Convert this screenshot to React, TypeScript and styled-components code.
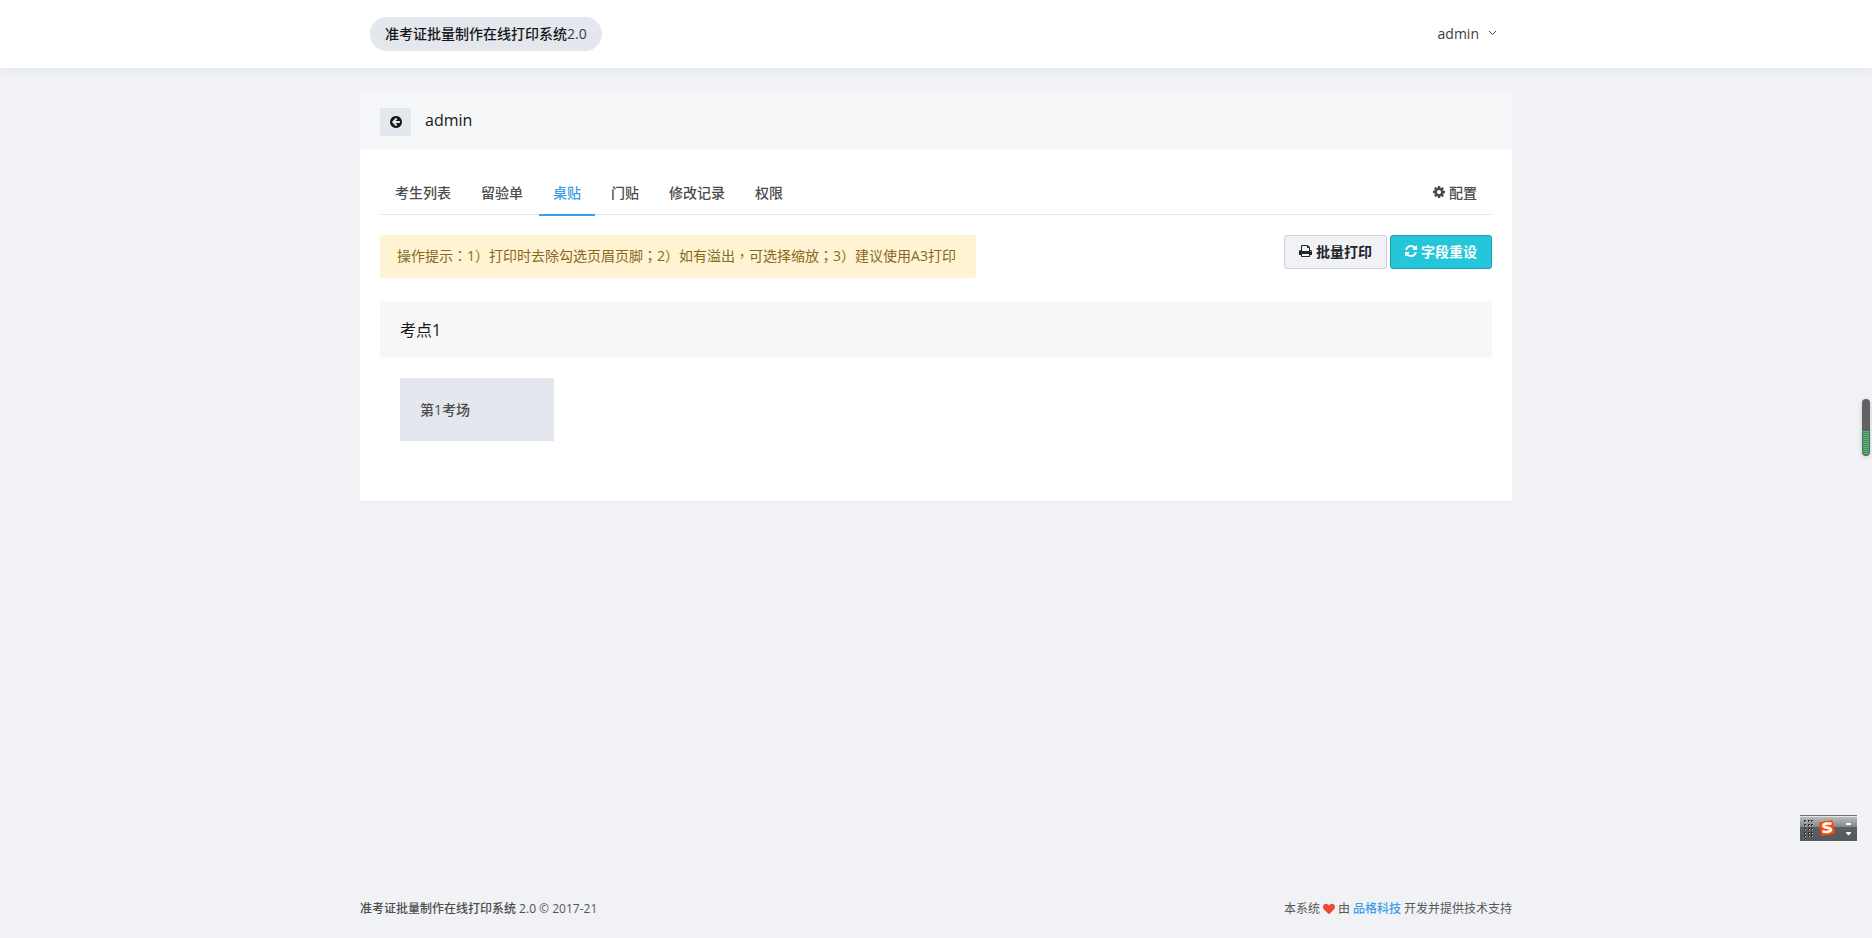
import React from "react";
import styled, { createGlobalStyle } from "styled-components";

const color = {
  body: "#f0f2f5",
  panel: "#f6f7f9",
  tint: "#e4e7ed",
  text: "#575757",
  dark: "#171717",
  primary: "#3f9ce8",
};

const GlobalStyle = createGlobalStyle`
  *, *::before, *::after { box-sizing: border-box; }
  body {
    margin: 0;
    background: ${color.body};
    color: ${color.text};
    font-family: "Open Sans", "Noto Sans CJK SC", sans-serif;
    font-size: 14px;
    line-height: 21px;
  }
  a { color: inherit; text-decoration: none; }
  button { font: inherit; cursor: pointer; }
  h1, h2, p, ul { margin: 0; padding: 0; }
`;

const Page = styled.div`
  display: flex;
  flex-direction: column;
  min-height: 100vh;
`;

const Container = styled.div`
  width: 100%;
  max-width: 1200px;
  margin: 0 auto;
  padding: 0 24px;
`;

const Header = styled.header`
  background: #fff;
  box-shadow: 0 2px 10px #e4e7ed;
`;

const HeaderRow = styled(Container)`
  display: flex;
  align-items: center;
  justify-content: space-between;
  height: 68px;
  padding: 0 34px;
`;

const Brand = styled.a`
  padding: 6px 15px 7px;
  border-radius: 17px;
  background: ${color.tint};
  color: ${color.dark};
  font-weight: 500;
  white-space: nowrap;
`;

const Version = styled.span`
  color: #3c3c3c;
  font-weight: 400;
`;

const UserButton = styled.button`
  display: flex;
  align-items: center;
  gap: 9px;
  padding: 5px 5px 7px;
  border: 0;
  background: none;
  color: #3c3c3c;
`;

const Main = styled.main`
  flex: 1;
  padding: 24px 0;
`;

const Card = styled.section`
  background: #fff;
  box-shadow: 0 1px 1px #e4e7ed;
`;

const CardHead = styled.div`
  display: flex;
  align-items: flex-start;
  gap: 14px;
  padding: 16px 20px 14px;
  background: ${color.panel};
`;

const BackButton = styled.button`
  display: flex;
  align-items: center;
  justify-content: center;
  width: 31px;
  height: 28px;
  padding: 0;
  border: 0;
  border-radius: 2px;
  background: ${color.tint};
  color: ${color.dark};
`;

const CardTitle = styled.h1`
  color: ${color.dark};
  font-size: 16px;
  font-weight: 400;
  line-height: 24px;
`;

const CardBody = styled.div`
  padding: 20px 20px 40px;
`;

const Tabs = styled.ul`
  display: flex;
  list-style: none;
  border-bottom: 1px solid ${color.tint};
`;

const Tab = styled.li<{ $end?: boolean }>`
  margin: 0 1px;
  ${(p) => (p.$end ? "margin-left: auto;" : "")}
`;

const TabLink = styled.a<{ $active?: boolean }>`
  display: flex;
  align-items: center;
  gap: 4px;
  height: 44px;
  padding: 0 14px;
  font-weight: 500;
  color: ${(p) => (p.$active ? color.primary : "#4c4c4c")};
  box-shadow: ${(p) => (p.$active ? `0 2px ${color.primary}` : "none")};
`;

const Tools = styled.div`
  display: flex;
  align-items: flex-start;
  justify-content: space-between;
  margin: 20px 0 24px;
`;

const Notice = styled.p`
  padding: 10px 20px 12px 17px;
  border-radius: 3px;
  background: #fff3d4;
  color: #866a1c;
`;

/* Traditional-style punctuation sits in the middle of its em box. */
const Centered = styled.span`
  font-family: "Noto Sans CJK TC", sans-serif;
`;

const Buttons = styled.div`
  display: flex;
  gap: 3px;
`;

const Button = styled.button<{ $info?: boolean }>`
  display: flex;
  align-items: center;
  gap: 4px;
  height: 34px;
  padding: 0 14px 2px;
  border: 1px solid ${(p) => (p.$info ? "#1e9cac" : "#cbcfe0")};
  border-radius: 3px;
  background: ${(p) => (p.$info ? "#26c6da" : color.body)};
  color: ${(p) => (p.$info ? "#fff" : "#212529")};
  font-weight: 600;
`;

const SiteTitle = styled.h2`
  padding: 16px 20px;
  background: ${color.panel};
  color: ${color.dark};
  font-size: 16px;
  font-weight: 400;
  line-height: 24px;
`;

const Rooms = styled.div`
  display: grid;
  grid-template-columns: repeat(auto-fill, 154px);
  gap: 20px;
  padding: 20px;
`;

const Room = styled.a`
  padding: 21px 20px;
  background: ${color.tint};
  color: #4c4c4c;
  font-weight: 500;
`;

const FooterRow = styled(Container)`
  display: flex;
  justify-content: space-between;
  padding: 20px 24px;
  font-size: 12px;
  line-height: 18px;
`;

const Product = styled.a`
  font-weight: 500;
  color: #4c4c4c;
`;

const Credit = styled.span`
  display: flex;
  align-items: center;
  gap: 3px;
`;

const Vendor = styled.a`
  color: ${color.primary};
  font-weight: 500;
`;

const Heart = styled.span`
  display: flex;
  color: #ea4b35;
`;

const Meter = styled.div`
  position: fixed;
  right: 2px;
  top: 399px;
  display: flex;
  flex-direction: column;
  justify-content: flex-end;
  width: 8px;
  height: 57px;
  padding: 1px;
  border-radius: 4px;
  background: #606163;
  box-shadow: 0 1px 4px #c8c9cc;
`;

const MeterFill = styled.div`
  height: 24px;
  border-radius: 0 0 3px 3px;
  background: repeating-linear-gradient(#3fc868 0 1px, #55806a 1px 2px);
`;

const InputBar = styled.div`
  position: fixed;
  right: 15px;
  bottom: 97px;
  width: 57px;
  height: 26px;

  svg { display: block; }
`;

const glyphs = {
  back: "M1408 960v-128q0-26-19-45t-45-19h-502l189-189q19-19 19-45t-19-45l-91-91q-18-18-45-18t-45 18l-362 362-91 91q-18 18-18 45t18 45l91 91 362 362q18 18 45 18t45-18l91-91q18-18 18-45t-18-45l-189-189h502q26 0 45-19t19-45zm256-64q0 209-103 385.5t-279.5 279.5-385.5 103-385.5-103-279.5-279.5-103-385.5 103-385.5 279.5-279.5 385.5-103 385.5 103 279.5 279.5 103 385.5z",
  cog: "M1152 896q0-106-75-181t-181-75-181 75-75 181 75 181 181 75 181-75 75-181zm512-109v222q0 12-8 23t-20 13l-185 28q-19 54-39 91 35 50 107 138 10 12 10 25t-9 23q-27 37-99 108t-94 71q-12 0-26-9l-138-108q-44 23-91 38-16 136-29 186-7 28-36 28h-222q-14 0-24.5-8.5t-11.5-21.5l-28-184q-49-16-90-37l-141 107q-10 9-25 9-14 0-25-11-126-114-165-168-7-10-7-23 0-12 8-23 15-21 51-66.5t54-70.5q-27-50-41-99l-183-27q-13-2-21-12.5t-8-23.5v-222q0-12 8-23t19-13l186-28q14-46 39-92-40-57-107-138-10-12-10-24 0-10 9-23 26-36 98.5-107.5t94.5-71.5q13 0 26 10l138 107q44-23 91-38 16-136 29-186 7-28 36-28h222q14 0 24.5 8.5t11.5 21.5l28 184q49 16 90 37l142-107q9-9 24-9 13 0 25 10 129 119 165 170 7 8 7 22 0 12-8 23-15 21-51 66.5t-54 70.5q26 50 41 98l183 28q13 2 21 12.5t8 23.5z",
  print:
    "M448 1536h896v-256h-896v256zm0-640h896v-384h-160q-40 0-68-28t-28-68v-160h-640v640zm1152 64q0-26-19-45t-45-19-45 19-19 45 19 45 45 19 45-19 19-45zm128 0v416q0 13-9.5 22.5t-22.5 9.5h-224v160q0 40-28 68t-68 28h-960q-40 0-68-28t-28-68v-160h-224q-13 0-22.5-9.5t-9.5-22.5v-416q0-79 56.5-135.5t135.5-56.5h64v-544q0-40 28-68t68-28h672q40 0 88 20t76 48l152 152q28 28 48 76t20 88v256h64q79 0 135.5 56.5t56.5 135.5z",
  refresh:
    "M1639 1056q0 5-1 7-64 268-268 434.5t-478 166.5q-146 0-282.5-55t-243.5-157l-129 129q-19 19-45 19t-45-19-19-45v-448q0-26 19-45t45-19h448q26 0 45 19t19 45-19 45l-137 137q71 66 161 102t187 36q134 0 250-65t186-179q11-17 53-117 8-23 30-23h192q13 0 22.5 9.5t9.5 22.5zm25-800v448q0 26-19 45t-45 19h-448q-26 0-45-19t-19-45 19-45l138-138q-148-137-349-137-134 0-250 65t-186 179q-11 17-53 117-8 23-30 23h-199q-13 0-22.5-9.5t-9.5-22.5v-7q65-268 270-434.5t480-166.5q146 0 284 55.5t245 156.5l130-129q19-19 45-19t45 19 19 45z",
  heart:
    "M896 1664q-26 0-44-18l-624-602q-10-8-27.5-26t-55.5-65.5-68-97.5-53.5-121-23.5-138q0-220 127-344t351-124q62 0 126.5 21.5t120 58 95.5 68.5 76 68q36-36 76-68t95.5-68.5 120-58 126.5-21.5q224 0 351 124t127 344q0 221-229 450l-623 600q-18 18-44 18z",
};

function Icon({ name, width = 12, height = 14 }: { name: keyof typeof glyphs; width?: number; height?: number }) {
  const span = Math.round((width / height) * 1792);
  return (
    <svg
      width={width}
      height={height}
      viewBox={`${(1792 - span) / 2} 0 ${span} 1792`}
      fill="currentColor"
      aria-hidden="true"
    >
      <path d={glyphs[name]} />
    </svg>
  );
}

const tabs = ["考生列表", "留验单", "桌贴", "门贴", "修改记录", "权限"];

const tip = "操作提示：1）打印时去除勾选页眉页脚；2）如有溢出，可选择缩放；3）建议使用A3打印";

const grip = [6, 10, 14, 18, 21].flatMap((y) => [4, 8, 11].map((x) => ({ x, y: y - 1 })));

export default function App() {
  return (
    <Page>
      <GlobalStyle />
      <Header>
        <HeaderRow>
          <Brand href="#">
            准考证批量制作在线打印系统<Version>2.0</Version>
          </Brand>
          <UserButton type="button">
            admin
            <svg width="9" height="6" viewBox="0 0 9 6" fill="none" stroke="currentColor" aria-hidden="true">
              <path d="M1 1l3.500 3.500L8 1" />
            </svg>
          </UserButton>
        </HeaderRow>
      </Header>

      <Main>
        <Container>
          <Card>
            <CardHead>
              <BackButton type="button" aria-label="返回">
                <Icon name="back" />
              </BackButton>
              <CardTitle>admin</CardTitle>
            </CardHead>
            <CardBody>
              <Tabs>
                {tabs.map((label) => (
                  <Tab key={label}>
                    <TabLink href="#" $active={label === "桌贴"}>
                      {label}
                    </TabLink>
                  </Tab>
                ))}
                <Tab $end>
                  <TabLink href="#">
                    <Icon name="cog" />
                    配置
                  </TabLink>
                </Tab>
              </Tabs>
              <Tools>
                <Notice>
                  {tip.split(/([：；，])/).map((part, i) => (i % 2 ? <Centered key={i}>{part}</Centered> : part))}
                </Notice>
                <Buttons>
                  <Button type="button">
                    <Icon name="print" width={13} />
                    批量打印
                  </Button>
                  <Button type="button" $info>
                    <Icon name="refresh" />
                    字段重设
                  </Button>
                </Buttons>
              </Tools>
              <SiteTitle>考点1</SiteTitle>
              <Rooms>
                <Room href="#">第1考场</Room>
              </Rooms>
            </CardBody>
          </Card>
        </Container>
      </Main>

      <footer>
        <FooterRow>
          <span>
            <Product href="#">准考证批量制作在线打印系统 2.0</Product> © 2017-21
          </span>
          <Credit>
            本系统
            <Heart>
              <Icon name="heart" width={12} height={12} />
            </Heart>
            由 <Vendor href="#">品格科技</Vendor> 开发并提供技术支持
          </Credit>
        </FooterRow>
      </footer>

      <Meter>
        <MeterFill />
      </Meter>
      <InputBar>
        <svg width="57" height="26" viewBox="0 0 57 26" aria-hidden="true">
          <defs>
            <linearGradient id="metal" x1="0" y1="0" x2="0" y2="1">
              <stop offset="0" stopColor="#c4c6c6" />
              <stop offset="0.450" stopColor="#858889" />
              <stop offset="0.460" stopColor="#5b5f61" />
              <stop offset="1" stopColor="#55595b" />
            </linearGradient>
          </defs>
          <rect width="57" height="26" fill="url(#metal)" />
          <rect width="57" height="1" fill="#6c7072" />
          <rect y="1" width="57" height="1" fill="#e4e6e6" />
          {grip.map((d) => (
            <g key={`${d.x}-${d.y}`}>
              <rect x={d.x} y={d.y} width="2" height="2" fill="#2b2d2e" />
              <rect x={d.x + 1} y={d.y + 1} width="1" height="1" fill="#c6c8c8" />
            </g>
          ))}
          <rect x="20" y="6" width="14" height="14" rx="2" fill="#fb4a08" transform="rotate(-10 27 13)" />
          <path
            d="M31.500 8.800C28 8 23.500 8.500 23.300 10.700C23.200 13 31 12.200 31 14.600C31 17.200 26 17.500 22.500 16.300"
            fill="none"
            stroke="#fff"
            strokeWidth="2.600"
          />
          <rect x="46" y="8" width="5" height="2" fill="#fff" />
          <path d="M46 17h5v1l-2.500 2.500L46 18z" fill="#fff" />
        </svg>
      </InputBar>
    </Page>
  );
}
